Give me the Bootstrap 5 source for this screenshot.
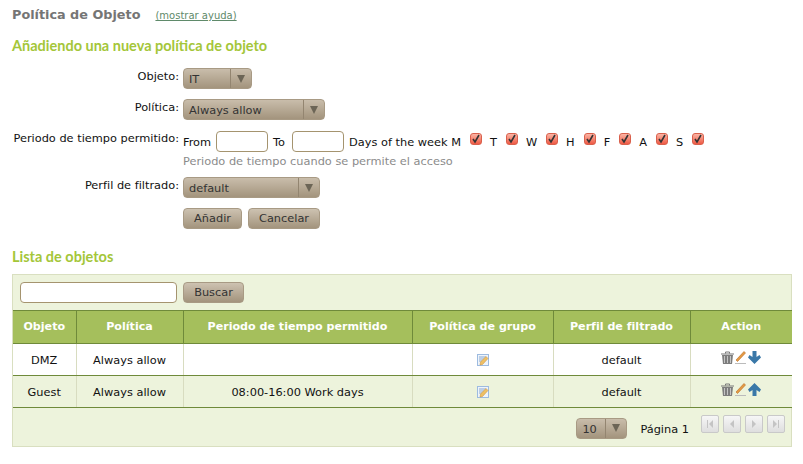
<!DOCTYPE html>
<html lang="es">
<head>
  <meta charset="UTF-8" />
  <title>Política de Objeto</title>
  <link rel="stylesheet" href="https://cdn.jsdelivr.net/npm/bootstrap@5.3.0/dist/css/bootstrap.min.css" />
  <style>
    body {
      font-family: "DejaVu Sans", sans-serif;
      font-size: 11.35px;
      line-height: 14px;
      color: #111;
      background: #fff;
    }
    .page-wrap { width: 803px; height: 464px; overflow: hidden; padding: 7px 11px 0 12px; }
    .page-title { font-size: 12.8px; font-weight: 700; color: #757575; margin: 0; line-height: 15px; }
    .help-link { font-size: 10px; color: #5f8a6a; margin-left: 15px; }
    .sect-title {
      font-family: "Lato", sans-serif;
      font-size: 14.5px;
      font-weight: 700;
      color: #a4c639;
      line-height: 18px;
      margin: 0;
    }
    .form-line { display: flex; align-items: flex-start; }
    .form-key { width: 167px; flex: none; text-align: right; padding-top: 1px; white-space: nowrap; }
    .form-key.key-tight { padding-top: 0; }
    .form-val { margin-left: 4px; }
    .pick-box {
      display: inline-flex;
      height: 21px;
      border: 1px solid #a89a84;
      border-radius: 4px;
      background: linear-gradient(#c9bdab, #a3947d);
      color: #333;
      line-height: 21px;
      overflow: hidden;
    }
    .pick-text { flex: 1; padding-left: 5px; }
    .pick-arrow {
      width: 21px;
      flex: none;
      border-left: 1px solid #938570;
      display: flex;
      align-items: center;
      justify-content: center;
    }
    .tri-down { width: 0; height: 0; border-left: 4px solid transparent; border-right: 4px solid transparent; border-top: 8px solid #6c6556; }
    .txt-box { height: 21px; border: 1px solid #a5946f; border-radius: 4px; background: #fff; display: block; padding: 0; }
    .hint-text { color: #8b8b8b; margin-top: 2px; }
    .day-check {
      width: 12px; height: 12px;
      flex: none;
      border-radius: 3px;
      border: 1px solid #d9604c;
      background: linear-gradient(#fbb5a5, #ef5a45);
      display: inline-flex;
      margin-top: -6px;
      margin-left: 9px;
    }
    .day-name { margin-left: 8px; }
    .beige-btn {
      height: 21px;
      padding: 0;
      font-size: 11.35px;
      line-height: 19px;
      color: #333;
      border: 1px solid #a89a84;
      border-radius: 4px;
      background: linear-gradient(#cdc2b1, #a3947d);
    }
    .list-panel { width: 780px; height: 173px; background: #edf3dc; border: 1px solid #d9dfc0; }
    .search-row { padding: 7px; height: 35px; }
    .search-box { width: 157px; }
    .obj-grid { width: 779px; border-collapse: collapse; table-layout: fixed; margin: 0; }
    .obj-grid th {
      background: #a5bf5c;
      color: #fff;
      font-size: 11.1px;
      font-weight: 700;
      height: 33px;
      padding: 0;
      text-align: center;
      vertical-align: middle;
      border: 0;
      border-top: 1px solid #6f8a3a;
      border-bottom: 1px solid #6f8a3a;
      border-right: 1px solid #6f8a3a;
    }
    .obj-grid th:last-child, .obj-grid td:last-child { border-right: 0; }
    .obj-grid td {
      height: 32px;
      padding: 0;
      text-align: center;
      vertical-align: middle;
      background: #fff;
      border: 0;
      border-bottom: 1px solid #6f8a3a;
      border-right: 1px solid #d8dcc0;
      color: #111;
    }
    .obj-grid tr.alt-row td { background: #edf3dc; }
    .act-icons { display: inline-flex; gap: 1px; align-items: center; height: 14px; margin-top: -1px; }
    .note-icon { margin-top: -2px; display: inline-block; }
    .pager-row { height: 38px; padding-right: 6px; margin-top: 1px; }
    .pager-pick { width: 51px; }
    .page-label { margin: 0 12px 0 13px; padding-top: 1px; }
    .page-btns { display: flex; gap: 4px; margin-top: -8px; }
    .page-btn {
      width: 18px; height: 18px;
      border: 1px solid #c9c9c9;
      border-radius: 2px;
      background: linear-gradient(#f6f6f6, #dedede);
      display: flex;
      align-items: center;
      justify-content: center;
    }
  </style>
</head>
<body>
  <div class="page-wrap">
    <div class="d-flex align-items-baseline">
      <h1 class="page-title">Política de Objeto</h1>
      <a class="help-link" href="#">(mostrar ayuda)</a>
    </div>

    <h2 class="sect-title" style="margin-top:14px">Añadiendo una nueva política de objeto</h2>

    <form class="d-flex flex-column" style="gap:10px;margin-top:13px">
      <div class="form-line">
        <div class="form-key">Objeto:</div>
        <div class="form-val"><div class="pick-box" style="width:69px"><span class="pick-text">IT</span><span class="pick-arrow"><i class="tri-down"></i></span></div></div>
      </div>
      <div class="form-line">
        <div class="form-key">Política:</div>
        <div class="form-val"><div class="pick-box" style="width:142px"><span class="pick-text">Always allow</span><span class="pick-arrow"><i class="tri-down"></i></span></div></div>
      </div>
      <div class="form-line" style="margin-top:1px">
        <div class="form-key key-tight">Periodo de tiempo permitido:</div>
        <div class="form-val">
          <div class="d-flex align-items-center" style="height:21px">
            <span>From</span>
            <input class="txt-box" style="width:52px;margin-left:5px" type="text" />
            <span style="margin-left:5px">To</span>
            <input class="txt-box" style="width:52px;margin-left:7px" type="text" />
            <span style="margin-left:5px">Days of the week M</span>
            <span class="day-check"></span>
            <span class="day-name">T</span><span class="day-check"></span>
            <span class="day-name">W</span><span class="day-check"></span>
            <span class="day-name">H</span><span class="day-check"></span>
            <span class="day-name">F</span><span class="day-check"></span>
            <span class="day-name">A</span><span class="day-check"></span>
            <span class="day-name">S</span><span class="day-check"></span>
          </div>
          <div class="hint-text">Periodo de tiempo cuando se permite el acceso</div>
        </div>
      </div>
      <div class="form-line" style="margin-top:-1px">
        <div class="form-key">Perfil de filtrado:</div>
        <div class="form-val"><div class="pick-box" style="width:137px"><span class="pick-text">default</span><span class="pick-arrow"><i class="tri-down"></i></span></div></div>
      </div>
      <div class="form-line">
        <div class="form-key"></div>
        <div class="form-val d-flex" style="gap:6px">
          <button type="button" class="btn beige-btn" style="width:59px">Añadir</button>
          <button type="button" class="btn beige-btn" style="width:72px">Cancelar</button>
        </div>
      </div>
    </form>

    <h2 class="sect-title" style="margin-top:19px;margin-bottom:8px">Lista de objetos</h2>

    <div class="list-panel">
      <div class="search-row d-flex" style="gap:6px">
        <input class="txt-box search-box" type="text" />
        <button type="button" class="btn beige-btn" style="width:61px">Buscar</button>
      </div>
      <table class="obj-grid">
        <colgroup><col style="width:63px"><col style="width:107px"><col style="width:229px"><col style="width:141px"><col style="width:137px"><col></colgroup>
        <thead>
          <tr><th>Objeto</th><th>Política</th><th>Periodo de tiempo permitido</th><th>Política de grupo</th><th>Perfil de filtrado</th><th>Action</th></tr>
        </thead>
        <tbody>
          <tr>
            <td>DMZ</td><td>Always allow</td><td></td>
            <td><svg class="note-icon" width="12" height="12" viewBox="0 0 12 12"><rect x=".5" y=".5" width="11" height="11" fill="#eef4fb" stroke="#9dbbe0"/><path d="M2 3h7M2 5h5M2 7h3" stroke="#8aa8cf"/><path d="M3 11l.5-3 5.500-5.500 2 2L5.500 10.500z" fill="#eec064" stroke="#c98a33" stroke-width=".5"/></svg></td>
            <td>default</td>
            <td><span class="act-icons">
              <svg width="13" height="13" viewBox="0 0 13 13"><path d="M0 3h13M4.500 2.500V1h4v1.500" stroke="#777" fill="none"/><path d="M1 4h11l-1 9H2z" fill="#7d7d7d"/><path d="M3.500 5v7M6.500 5v7M9.500 5v7" stroke="#c4c4c4"/></svg>
              <svg width="12" height="13" viewBox="0 0 12 13"><path d="M1 9l1.500 1.500 8-8.500L9 .5z" fill="#e59a45" stroke="#b86d22" stroke-width=".6"/><path d="M0 12.500h11" stroke="#bbb"/></svg>
              <svg width="13" height="13" viewBox="0 0 13 13"><path d="M4.500 0h4v6l3-2 1.500 2.500-6.500 6.500L0 6.500 1.500 4l3 2z" fill="#3a78a8"/></svg>
            </span></td>
          </tr>
          <tr class="alt-row">
            <td>Guest</td><td>Always allow</td><td>08:00-16:00 Work days</td>
            <td><svg class="note-icon" width="12" height="12" viewBox="0 0 12 12"><rect x=".5" y=".5" width="11" height="11" fill="#eef4fb" stroke="#9dbbe0"/><path d="M2 3h7M2 5h5M2 7h3" stroke="#8aa8cf"/><path d="M3 11l.5-3 5.500-5.500 2 2L5.500 10.500z" fill="#eec064" stroke="#c98a33" stroke-width=".5"/></svg></td>
            <td>default</td>
            <td><span class="act-icons">
              <svg width="13" height="13" viewBox="0 0 13 13"><path d="M0 3h13M4.500 2.500V1h4v1.500" stroke="#777" fill="none"/><path d="M1 4h11l-1 9H2z" fill="#7d7d7d"/><path d="M3.500 5v7M6.500 5v7M9.500 5v7" stroke="#c4c4c4"/></svg>
              <svg width="12" height="13" viewBox="0 0 12 13"><path d="M1 9l1.500 1.500 8-8.500L9 .5z" fill="#e59a45" stroke="#b86d22" stroke-width=".6"/><path d="M0 12.500h11" stroke="#bbb"/></svg>
              <svg width="13" height="13" viewBox="0 0 13 13"><path d="M4.500 13h4V7l3 2 1.500-2.500L6.500 0 0 6.500 1.500 9l3-2z" fill="#3a78a8"/></svg>
            </span></td>
          </tr>
        </tbody>
      </table>
      <div class="pager-row d-flex justify-content-end align-items-center">
        <div class="pick-box pager-pick"><span class="pick-text">10</span><span class="pick-arrow"><i class="tri-down"></i></span></div>
        <span class="page-label">Página 1</span>
        <div class="page-btns">
          <span class="page-btn"><svg width="8" height="8" viewBox="0 0 8 8"><path d="M1 0h1v8H1zM7 0v8L3 4z" fill="#c4c4c4"/></svg></span>
          <span class="page-btn"><svg width="8" height="8" viewBox="0 0 8 8"><path d="M6 0v8L2 4z" fill="#c4c4c4"/></svg></span>
          <span class="page-btn"><svg width="8" height="8" viewBox="0 0 8 8"><path d="M2 0v8l4-4z" fill="#c4c4c4"/></svg></span>
          <span class="page-btn"><svg width="8" height="8" viewBox="0 0 8 8"><path d="M1 0v8l4-4zM6 0h1v8H6z" fill="#c4c4c4"/></svg></span>
        </div>
      </div>
    </div>
  </div>

  <script src="https://cdn.jsdelivr.net/npm/bootstrap@5.3.0/dist/js/bootstrap.bundle.min.js"></script>
  <script>
    // same tick mark in each day box
    document.querySelectorAll(".day-check").forEach((box) => {
      box.innerHTML = '<svg width="10" height="10" viewBox="0 0 10 10"><path d="M2 5l2 3 4-7" stroke="#333" stroke-width="1.6" fill="none"/></svg>';
    });
  </script>
</body>
</html>
